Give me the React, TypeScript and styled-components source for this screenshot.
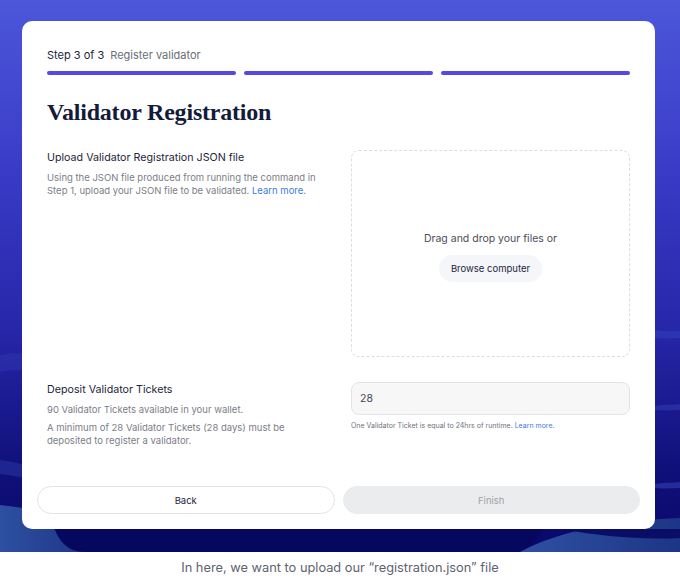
import styled, { createGlobalStyle } from "styled-components"

const GlobalStyle = createGlobalStyle`
	html, body {
		margin: 0;
		padding: 0;
		background: #ffffff;
		font-family: Inter, "Noto Sans", sans-serif;
	}
`

const Page = styled.div`
	width: 680px;
	display: flex;
	flex-direction: column;
`

const Hero = styled.div`
	position: relative;
	height: 552px;
	padding: 21px 25px 0 22px;
	box-sizing: border-box;
	overflow: hidden;
	background: linear-gradient(180deg, #4c57da 0%, #3a3cc8 30%, #2626a8 60%, #10107a 85%, #08086a 100%);
`

const Backdrop = styled.svg`
	position: absolute;
	inset: 0;
	width: 680px;
	height: 552px;
`

const Card = styled.div`
	position: relative;
	width: 633px;
	height: 508px;
	box-sizing: border-box;
	background: #ffffff;
	border-radius: 10px;
	padding: 26px 25px 15px;
	display: flex;
	flex-direction: column;
`

const StepRow = styled.div`
	display: flex;
	gap: 6px;
	font-size: 11px;
	line-height: 16px;
`

const StepCount = styled.span`
	color: #23263a;
`

const StepName = styled.span`
	color: #6a6d78;
`

const Bars = styled.div`
	display: grid;
	grid-template-columns: repeat(3, 1fr);
	gap: 8px;
	margin-top: 8px;
`

const Bar = styled.div`
	height: 4px;
	border-radius: 2px;
	background: #5548e6;
`

const Title = styled.h1`
	margin: 22px 0 0;
	font-family: "Liberation Serif", "DejaVu Serif", serif;
	font-weight: 700;
	font-size: 24px;
	line-height: 30px;
	color: #141a3a;
	letter-spacing: -0.2px;
`

const Sections = styled.div`
	display: grid;
	grid-template-columns: 1fr 279px;
	column-gap: 24px;
	row-gap: 25px;
	margin-top: 23px;
`

const Info = styled.div`
	display: flex;
	flex-direction: column;
	gap: 5px;
`

const Label = styled.div`
	font-size: 10.7px;
	line-height: 16px;
	color: #23263a;
`

const Note = styled.p`
	margin: 0;
	font-size: 9.5px;
	line-height: 13px;
	color: #7b7e88;
	max-width: 270px;
`

const Link = styled.span`
	color: #3d7be0;
`

const DropZone = styled.div`
	height: 207px;
	box-sizing: border-box;
	border: 1px dashed #dcdde2;
	border-radius: 8px;
	display: flex;
	flex-direction: column;
	align-items: center;
	justify-content: center;
	gap: 9px;
	padding-top: 6px;
`

const DropText = styled.div`
	font-size: 10.5px;
	line-height: 14px;
	color: #4b4d57;
`

const BrowseButton = styled.button`
	height: 27px;
	padding: 0 12px;
	border: none;
	border-radius: 14px;
	background: #f4f6fa;
	color: #23263a;
	font-family: inherit;
	font-size: 9.5px;
`

const Field = styled.div`
	display: flex;
	flex-direction: column;
	gap: 6px;
`

const Input = styled.div`
	height: 33px;
	box-sizing: border-box;
	border: 1px solid #e2e3e6;
	border-radius: 8px;
	background: #f7f7f8;
	padding: 0 8px;
	display: flex;
	align-items: center;
	font-size: 10.5px;
	color: #44465a;
`

const Hint = styled.div`
	font-size: 7px;
	line-height: 10px;
	color: #6f717b;
`

const Footer = styled.div`
	margin: auto -10px 0;
	display: grid;
	grid-template-columns: 1fr 1fr;
	gap: 8px;
`

const Action = styled.button<{ $disabled?: boolean }>`
	height: 28px;
	border-radius: 14px;
	font-family: inherit;
	font-size: 9.5px;
	border: 1px solid ${(p) => (p.$disabled ? "#ebecee" : "#e4e5e8")};
	background: ${(p) => (p.$disabled ? "#ebecee" : "#ffffff")};
	color: ${(p) => (p.$disabled ? "#a0a2a8" : "#23263a")};
`

const Caption = styled.div`
	height: 31px;
	display: flex;
	align-items: center;
	justify-content: center;
	font-size: 12.8px;
	color: #606270;
`

const Background = () => (
	<Backdrop viewBox="0 0 680 552" preserveAspectRatio="none">
		<defs>
			<linearGradient id="band" x1="0" x2="1" y1="0" y2="0">
				<stop offset="0" stopColor="#2e50a2" />
				<stop offset="1" stopColor="#1d3586" />
			</linearGradient>
		</defs>
		<path d="M0 355 C 60 345, 120 372, 200 368 L 200 380 C 120 386, 60 362, 0 372 Z" fill="#3440b8" opacity="0.35" />
		<path d="M655 330 C 665 332, 675 330, 680 331 L 680 338 C 672 338, 664 339, 655 338 Z" fill="#3a4ac0" opacity="0.4" />
		<path d="M655 406 C 665 404, 675 405, 680 404 L 680 410 C 672 410, 664 411, 655 410 Z" fill="#3a4ac0" opacity="0.4" />
		<path d="M655 484 C 665 482, 675 483, 680 482 L 680 488 C 672 488, 664 489, 655 488 Z" fill="#3a4ac0" opacity="0.5" />
		<path d="M0 460 C 20 462, 40 470, 60 478 L 60 490 C 40 482, 20 476, 0 474 Z" fill="#2b3aa6" opacity="0.5" />
		<path d="M0 505 C 30 508, 60 515, 90 522 L 90 552 L 0 552 Z" fill="url(#band)" />
		<path d="M520 552 C 560 530, 620 520, 680 518 L 680 552 Z" fill="url(#band)" />
		<path d="M560 529 L 680 529 L 680 538 C 640 540, 600 536, 560 529 Z" fill="#0a0d66" />
		<path d="M52 520 C 56 538, 66 552, 84 552 L 508 552 C 528 552, 540 540, 546 520 Z" fill="#06075e" />
	</Backdrop>
)

export default function App() {
	return (
		<Page>
			<GlobalStyle />
			<Hero>
				<Background />
				<Card>
					<StepRow>
						<StepCount>Step 3 of 3</StepCount>
						<StepName>Register validator</StepName>
					</StepRow>
					<Bars>
						<Bar />
						<Bar />
						<Bar />
					</Bars>
					<Title>Validator Registration</Title>
					<Sections>
						<Info>
							<Label>Upload Validator Registration JSON file</Label>
							<Note>
								Using the JSON file produced from running the command in Step 1, upload your JSON file to be
								validated. <Link>Learn more.</Link>
							</Note>
						</Info>
						<DropZone>
							<DropText>Drag and drop your files or</DropText>
							<BrowseButton>Browse computer</BrowseButton>
						</DropZone>
						<Info>
							<Label>Deposit Validator Tickets</Label>
							<Note>90 Validator Tickets available in your wallet.</Note>
							<Note>A minimum of 28 Validator Tickets (28 days) must be deposited to register a validator.</Note>
						</Info>
						<Field>
							<Input>28</Input>
							<Hint>
								One Validator Ticket is equal to 24hrs of runtime. <Link>Learn more.</Link>
							</Hint>
						</Field>
					</Sections>
					<Footer>
						<Action>Back</Action>
						<Action $disabled>Finish</Action>
					</Footer>
				</Card>
			</Hero>
			<Caption>In here, we want to upload our “registration.json” file</Caption>
		</Page>
	)
}
